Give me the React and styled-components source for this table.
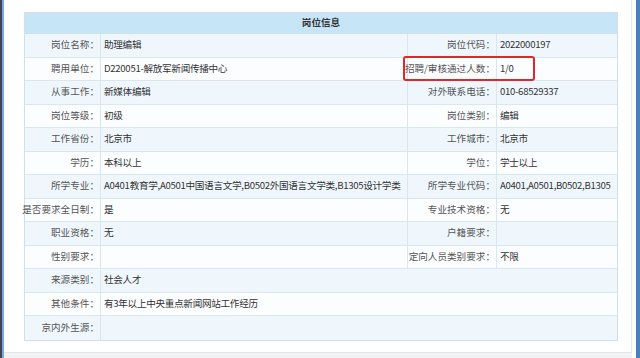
import React from "react";
import styled, { createGlobalStyle } from "styled-components";

const GlobalStyle = createGlobalStyle`
  html, body {
    margin: 0;
    padding: 0;
    background: #fff;
  }
  body {
    width: 640px;
    height: 358px;
    overflow: hidden;
    font-family: "Noto Sans CJK SC", "Microsoft YaHei", sans-serif;
  }
`;

const rows = [
  { label: "岗位名称：", value: "助理编辑", label2: "岗位代码：", value2: "2022000197" },
  { label: "聘用单位：", value: "D220051-解放军新闻传播中心", label2: "招聘/审核通过人数：", value2: "1/0" },
  { label: "从事工作：", value: "新媒体编辑", label2: "对外联系电话：", value2: "010-68529337" },
  { label: "岗位等级：", value: "初级", label2: "岗位类别：", value2: "编辑" },
  { label: "工作省份：", value: "北京市", label2: "工作城市：", value2: "北京市" },
  { label: "学历：", value: "本科以上", label2: "学位：", value2: "学士以上" },
  {
    label: "所学专业：",
    value: "A0401教育学,A0501中国语言文学,B0502外国语言文学类,B1305设计学类",
    label2: "所学专业代码：",
    value2: "A0401,A0501,B0502,B1305",
  },
  { label: "是否要求全日制：", value: "是", label2: "专业技术资格：", value2: "无" },
  { label: "职业资格：", value: "无", label2: "户籍要求：", value2: "" },
  { label: "性别要求：", value: "", label2: "定向人员类别要求：", value2: "不限" },
  { label: "来源类别：", value: "社会人才" },
  { label: "其他条件：", value: "有3年以上中央重点新闻网站工作经历" },
  { label: "京内外生源：", value: "" },
];

const App = () => {
  return (
    <>
      <GlobalStyle />
      <Screen>
        <EdgeLeft />
        <Main>
          <Panel>
            <Frame>
              <Sheet>
                <Title>岗位信息</Title>
                {rows.map((r, i) => {
                  const shade = i % 2 === 0;
                  const last = i === rows.length - 1;
                  return (
                    <React.Fragment key={i}>
                      <Label $shade={shade} $last={last}>{r.label}</Label>
                      {r.label2 ? (
                        <>
                          <Value $shade={shade} $last={last} $divider>
                            {r.value}
                          </Value>
                          <Label $shade={shade} $last={last}>{r.label2}</Label>
                          <Value $shade={shade} $last={last}>{r.value2}</Value>
                        </>
                      ) : (
                        <Value $shade={shade} $last={last} $wide>
                          {r.value}
                        </Value>
                      )}
                    </React.Fragment>
                  );
                })}
              </Sheet>
              <Highlight />
            </Frame>
          </Panel>
          <Footer />
        </Main>
        <Gutter />
        <EdgeRight />
      </Screen>
    </>
  );
};

const Screen = styled.div`
  display: flex;
  width: 640px;
  height: 358px;
  background: #fff;
`;

const EdgeLeft = styled.div`
  width: 2px;
  flex: none;
  background: #3c4756;
  border-right: 2px solid #7ea6d8;
`;

const Main = styled.div`
  flex: 1;
  display: flex;
  flex-direction: column;
`;

const Panel = styled.div`
  flex: 1;
  padding: 12px 0 0 20px;
  border-right: 1px solid #e6e8ea;
`;

const Frame = styled.div`
  position: relative;
  width: 594px;
`;

const Sheet = styled.div`
  display: grid;
  grid-template-columns: 76px 307px 89px 120px;
  grid-template-rows: 21px;
  grid-auto-rows: 23.5px;
  border: 1px solid #cfe0ec;
  font-size: 9.6px;
  line-height: 1;
`;

const Title = styled.div`
  grid-column: 1 / -1;
  display: flex;
  align-items: center;
  justify-content: center;
  background: #c6e6f7;
  color: #333;
  font-weight: bold;
  border-bottom: 1px solid #cfe0ec;
`;

const Cell = styled.div`
  display: flex;
  align-items: center;
  min-width: 0;
  white-space: nowrap;
  background: ${(p) => (p.$shade ? "#eff7fd" : "#fcfdff")};
  border-bottom: ${(p) => (p.$last ? "none" : "1px solid #d9e7f1")};
  box-sizing: border-box;
`;

const Label = styled(Cell)`
  justify-content: flex-end;
  padding-right: 1px;
  color: #555;
  border-right: 1px solid #d9e7f1;
`;

const Value = styled(Cell)`
  padding-left: 3px;
  color: #333;
  letter-spacing: -0.3px;
  overflow: hidden;
  grid-column: ${(p) => (p.$wide ? "span 3" : "auto")};
  border-right: ${(p) => (p.$divider ? "1px solid #d9e7f1" : "none")};
`;

const Highlight = styled.div`
  position: absolute;
  left: 379px;
  top: 44px;
  width: 132px;
  height: 25px;
  box-sizing: border-box;
  border: 2px solid #e0282c;
  border-radius: 3px;
`;

const Footer = styled.div`
  height: 5px;
  flex: none;
  background: #f1f2f3;
  border-top: 1px solid #e2e4e6;
`;

const Gutter = styled.div`
  width: 4px;
  flex: none;
  background: #fff;
`;

const EdgeRight = styled.div`
  width: 4px;
  flex: none;
  background: #4c7fc2;
`;

export default App;
